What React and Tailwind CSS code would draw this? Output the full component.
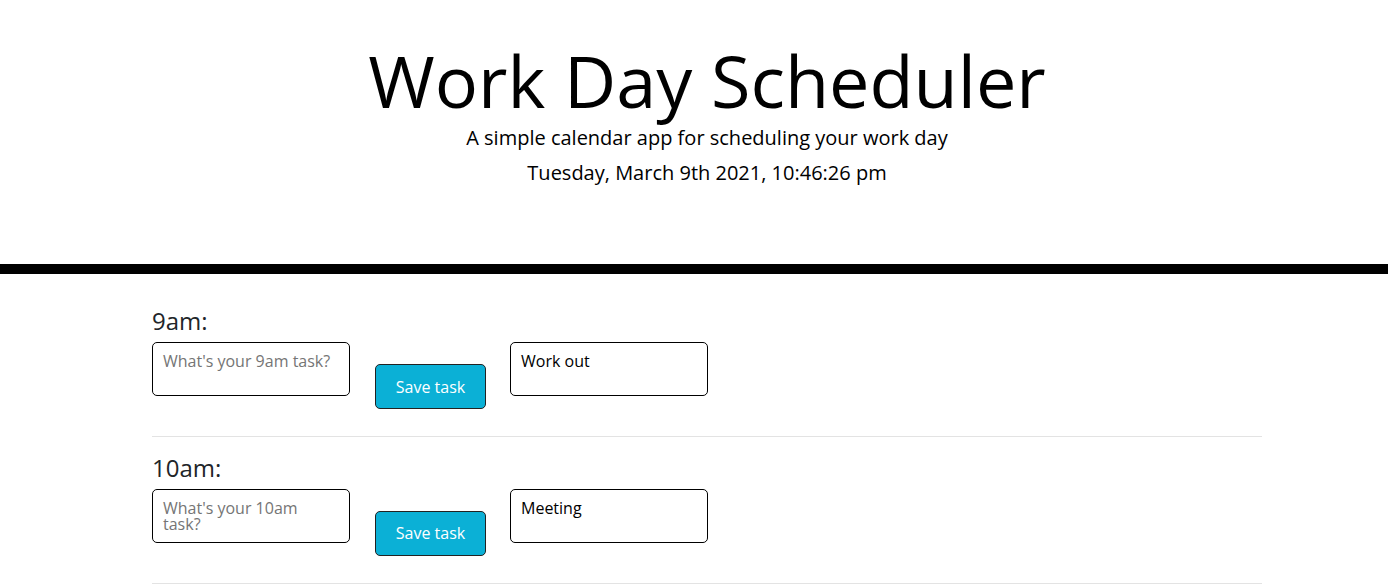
const hours = [
  { label: '9am', placeholder: "What's your 9am task?", saved: 'Work out' },
  { label: '10am', placeholder: "What's your 10am task?", saved: 'Meeting' },
  { label: '11am', placeholder: "What's your 11am task?", saved: '' },
]

function HourRow({ label, placeholder, saved }) {
  return (
    <div className="pt-[17px] pb-[27px] border-b border-[#e3e3e3]">
      <h4 className="text-[24px] leading-[1.2] text-[#212529]">{label}:</h4>
      <div className="flex items-start mt-[6px]">
        <textarea
          placeholder={placeholder}
          className="w-[198px] h-[54px] border border-black rounded-[5px] px-[10px] pt-[10px] pb-[4px] text-[16px] leading-[16px] text-black placeholder:text-[#757575] resize-none outline-none"
        />
        <button className="ml-[25px] mt-[22px] w-[111px] h-[45px] bg-[#0bb0d6] border border-[#222] rounded-[5px] text-white text-[16px]">
          Save task
        </button>
        <div className="ml-[24px] w-[198px] h-[54px] border border-black rounded-[5px] px-[10px] py-[7px] text-[16px] leading-[22px] text-black">
          {saved}
        </div>
      </div>
    </div>
  )
}

export default function App() {
  return (
    <div className="min-h-screen bg-white text-black font-['Open_Sans',sans-serif]">
      <header className="pt-[37px] pb-[76px] pl-[26px] border-b-[10px] border-black text-center">
        <h1 className="text-[72px] leading-[1.2] font-normal">Work Day Scheduler</h1>
        <p className="text-[20px] leading-[1.5]">A simple calendar app for scheduling your work day</p>
        <p className="text-[20px] leading-[1.5] mt-[5px]">Tuesday, March 9th 2021, 10:46:26 pm</p>
      </header>
      <main className="w-[1110px] mx-auto pt-[16px] relative left-[13px]">
        {hours.map((h) => (
          <HourRow key={h.label} {...h} />
        ))}
      </main>
    </div>
  )
}
